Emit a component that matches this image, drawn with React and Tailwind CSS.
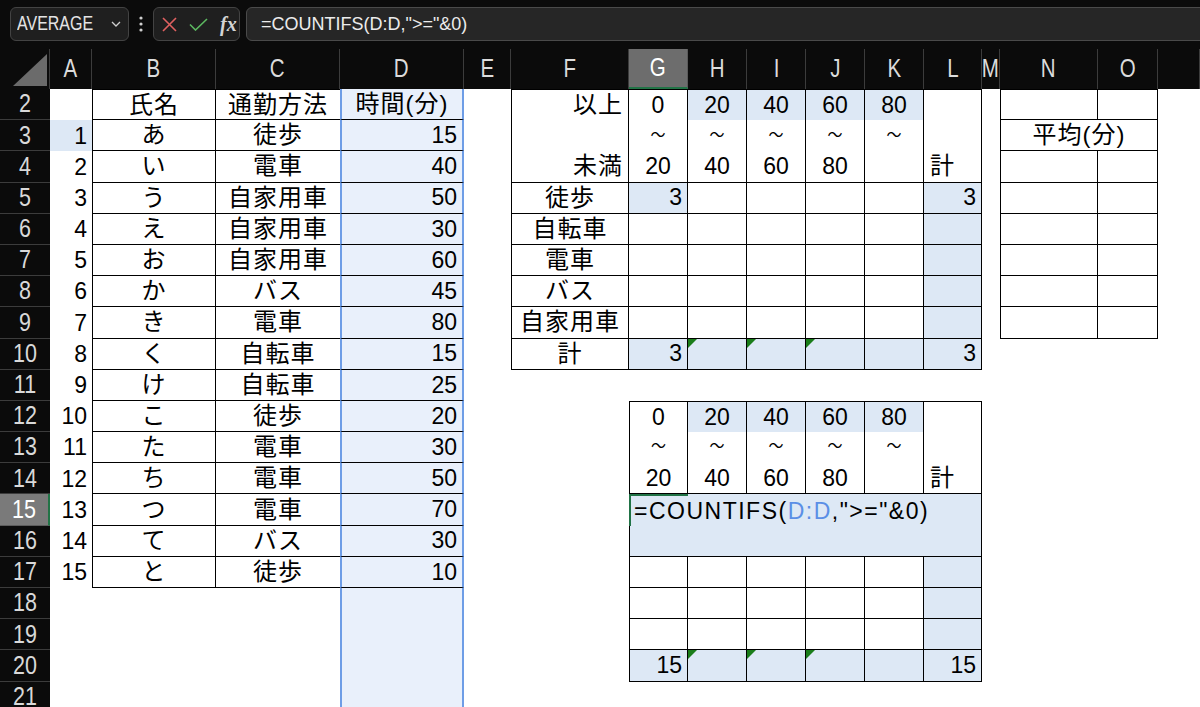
import React from "react";

// column letter + width class (widths measured off the sheet)
const COLS = [
  ["A", "w-[42px]"],
  ["B", "w-[124px]"],
  ["C", "w-[124px]"],
  ["D", "w-[124px]"],
  ["E", "w-[47px]"],
  ["F", "w-[118px]"],
  ["G", "w-[59px]"],
  ["H", "w-[59px]"],
  ["I", "w-[59px]"],
  ["J", "w-[59px]"],
  ["K", "w-[59px]"],
  ["L", "w-[58px]"],
  ["M", "w-[18px]"],
  ["N", "w-[98px]"],
  ["O", "w-[60px]"],
  ["P", "flex-1"],
];

const ROWS = [2, 3, 4, 5, 6, 7, 8, 9, 10, 11, 12, 13, 14, 15, 16, 17, 18, 19, 20, 21];

const names = ["あ", "い", "う", "え", "お", "か", "き", "く", "け", "こ", "た", "ち", "つ", "て", "と"];
const ways = ["徒歩", "電車", "自家用車", "自家用車", "自家用車", "バス", "電車", "自転車", "自転車", "徒歩", "電車", "電車", "電車", "バス", "徒歩"];
const mins = [15, 40, 50, 30, 60, 45, 80, 15, 25, 20, 30, 50, 70, 30, 10];

const bc = { l: "border-l", r: "border-r", t: "border-t", b: "border-b" };
const al = {
  l: "justify-start pl-[6px]",
  c: "justify-center",
  r: "justify-end pr-[5px]",
};

// build the sheet contents
const cells = {};
const set = (key, o) => {
  cells[key] = { ...cells[key], ...o };
};

// table 1: B2:D17
for (let r = 2; r <= 17; r++) {
  set("B" + r, { b: "lrb" + (r === 2 ? "t" : "") });
  set("C" + r, { b: "b" + (r === 2 ? "t" : "") });
}
set("B2", { t: "氏名", jp: true });
set("C2", { t: "通勤方法", jp: true });
set("D2", { t: "時間(分)", jp: true });
names.forEach((n, i) => {
  const r = i + 3;
  set("A" + r, { t: i + 1, a: "r", cls: "pr-[2px]" });
  set("B" + r, { t: n, jp: true });
  set("C" + r, { t: ways[i], jp: true });
  set("D" + r, { t: mins[i], a: "r", cls: "pr-[3px]" });
});
set("A3", { bg: 1 });
for (let r = 2; r <= 21; r++) {
  set("D" + r, {
    bg: 2,
    side: r <= 17
      ? "border-l-2 border-r-2 border-b border-l-[#6e9de6] border-r-[#6e9de6] border-b-black"
      : "border-l-2 border-r-2 border-l-[#6e9de6] border-r-[#6e9de6]",
  });
}

// header block used by table 2 and table 4
const band = (top, first) => {
  const ks = ["F", "G", "H", "I", "J", "K", "L"].slice(first === "F" ? 0 : 1);
  for (let r = top; r <= top + 2; r++) {
    ks.forEach((k) => {
      set(k + r, {
        b: (k === first ? "l" : "") + "r" + (r === top ? "t" : "") + (r === top + 2 ? "b" : ""),
      });
    });
  }
  set("G" + top, { t: 0 });
  set("H" + top, { t: 20, bg: 1 });
  set("I" + top, { t: 40, bg: 1 });
  set("J" + top, { t: 60, bg: 1 });
  set("K" + top, { t: 80, bg: 1 });
  ["G", "H", "I", "J", "K"].forEach((k) => set(k + (top + 1), { t: "～", cls: "text-[15px] pb-[2px]" }));
  set("G" + (top + 2), { t: 20 });
  set("H" + (top + 2), { t: 40 });
  set("I" + (top + 2), { t: 60 });
  set("J" + (top + 2), { t: 80 });
  set("L" + (top + 2), { t: "計", a: "l", jp: true });
};

// table 2: F2:L10
band(2, "F");
set("F2", { t: "以上", a: "r", jp: true });
set("F4", { t: "未満", a: "r", jp: true });
["徒歩", "自転車", "電車", "バス", "自家用車", "計"].forEach((lab, i) => {
  const r = i + 5;
  ["F", "G", "H", "I", "J", "K", "L"].forEach((k) => set(k + r, { b: (k === "F" ? "l" : "") + "rb" }));
  set("F" + r, { t: lab, jp: true });
  set("L" + r, { bg: 1 });
});
set("G5", { t: 3, a: "r", bg: 1 });
set("L5", { t: 3, a: "r" });
set("G10", { t: 3, a: "r", bg: 1 });
["H", "I", "J"].forEach((k) => set(k + "10", { bg: 1, tri: true }));
set("K10", { bg: 1 });
set("L10", { t: 3, a: "r" });

// table 3: N2:O9
for (let r = 2; r <= 9; r++) {
  set("N" + r, { b: "lrb" + (r === 2 ? "t" : "") });
  set("O" + r, { b: "rb" + (r === 2 ? "t" : "") });
}
set("N3", { t: "平均(分)", jp: true, w: "w-[158px]" });

// table 4: G12:L20
band(12, "G");
["G", "H", "I", "J", "K", "L"].forEach((k) => {
  set(k + "15", { bg: 1 });
  set(k + "16", { bg: 1, b: "b" });
});
set("G15", {
  a: "l",
  cls: "z-10 border-l-2 border-t-2 border-[#217346] !pl-[3px] tracking-[1.5px]",
  t: (
    <>
      {"=COUNTIFS("}
      <span className="text-[#5b8fe6]">D:D</span>
      {',">="&0)'}
    </>
  ),
});
set("G16", { b: "lb" });
set("L15", { b: "r" });
set("L16", { b: "rb" });
for (let r = 17; r <= 20; r++) {
  ["G", "H", "I", "J", "K", "L"].forEach((k) => set(k + r, { b: (k === "G" ? "l" : "") + "rb" }));
  set("L" + r, { bg: 1 });
}
set("G20", { t: 15, a: "r", bg: 1 });
["H", "I", "J"].forEach((k) => set(k + "20", { bg: 1, tri: true }));
set("K20", { bg: 1 });
set("L20", { t: 15, a: "r" });

const Cell = ({ col, r }) => {
  const [k, w] = col;
  const c = cells[k + r] || {};
  const cls = [
    "relative shrink-0 h-full flex items-center whitespace-nowrap",
    c.w || w,
    c.b ? "border-black " + c.b.split("").map((x) => bc[x]).join(" ") : "",
    c.side || "",
    c.bg === 1 ? "bg-[#dde8f5]" : c.bg === 2 ? "bg-[#e9f0fb]" : "",
    al[c.a || "c"],
    c.jp ? "text-[24px] tracking-[1px]" : "",
    c.cls || "",
  ].join(" ");

  return (
    <div className={cls}>
      {c.tri && (
        <span className="absolute top-0 left-0 w-0 h-0 border-t-[9px] border-r-[9px] border-t-[#1a7d1a] border-r-transparent" />
      )}
      {c.t}
    </div>
  );
};

const Row = ({ r }) => {
  const cols = r === 3 ? COLS.filter((c) => c[0] !== "O") : COLS;
  const active = r === 15;

  return (
    <div className="flex h-[31.2px]">
      <div
        className={
          "w-[50px] shrink-0 h-full flex items-center justify-center border-b font-['Liberation_Sans',sans-serif] text-[25px] " +
          (active
            ? "bg-[#7a7a7a] border-b-[#5c5c5c] border-r-2 border-r-[#217346] text-white"
            : "bg-[#0b0b0b] border-b-[#3c3c3c] text-[#d9d9d9]")
        }
      >
        <span className="inline-block scale-x-[0.86]">{r}</span>
      </div>
      {cols.map((c) => (
        <Cell key={c[0]} col={c} r={r} />
      ))}
    </div>
  );
};

const Toolbar = () => (
  <div className="h-[49px] shrink-0 bg-[#0b0b0b] flex items-start pt-[7px] pl-[10px]">
    <div className="w-[119px] h-[34px] shrink-0 rounded-md bg-[#1f1f1f] border border-[#434343] flex items-center justify-between pl-[6px] pr-[7px]">
      <span className="inline-block origin-left scale-x-[0.82] font-['Liberation_Sans',sans-serif] text-[19.5px] text-[#e4e4e4]">
        AVERAGE
      </span>
      <svg width="10" height="6" viewBox="0 0 10 6" fill="none">
        <path d="M1 1l4 4 4-4" stroke="#cfcfcf" strokeWidth="1.3" />
      </svg>
    </div>
    <div className="w-[24px] h-[34px] shrink-0 flex items-center justify-center">
      <svg width="4" height="16" viewBox="0 0 4 16">
        <circle cx="2" cy="2" r="1.6" fill="#cfcfcf" />
        <circle cx="2" cy="8" r="1.6" fill="#cfcfcf" />
        <circle cx="2" cy="14" r="1.6" fill="#cfcfcf" />
      </svg>
    </div>
    <div className="w-[87px] h-[34px] shrink-0 rounded-md bg-[#1f1f1f] border border-[#434343] flex items-center pl-[8px] gap-[12px]">
      <svg width="15" height="15" viewBox="0 0 15 15" fill="none">
        <path d="M1 1L14 14M14 1L1 14" stroke="#e06060" strokeWidth="1.6" />
      </svg>
      <svg width="19" height="13" viewBox="0 0 19 13" fill="none">
        <path d="M1 6.5l5.5 5.5L18 1" stroke="#5cb860" strokeWidth="1.6" />
      </svg>
      <span className="italic font-semibold font-['Liberation_Serif',serif] text-[20px] text-[#d4d4d4] leading-none">
        fx
      </span>
    </div>
    <div className="flex-1 h-[34px] ml-[6px] -mr-[8px] rounded-md bg-[#262626] border border-[#4a4a4a] flex items-center pl-[14px] font-['Liberation_Sans',sans-serif] text-[18px] text-[#ececec]">
      =COUNTIFS(D:D,"&gt;="&amp;0)
    </div>
  </div>
);

const HeaderRow = () => (
  <div className="flex h-[40px] shrink-0 bg-[#0b0b0b] font-['Liberation_Sans',sans-serif] text-[25px]">
    <div className="w-[50px] shrink-0 h-full border-r border-[#3c3c3c]">
      <svg width="50" height="40" viewBox="0 0 50 40">
        <polygon points="13,37 47,37 47,5" fill="#6b6b6b" />
      </svg>
    </div>
    {COLS.map(([k, w]) => (
      <div
        key={k}
        className={
          "shrink-0 h-full flex items-center justify-center border-r overflow-hidden " +
          w +
          (k === "G"
            ? " bg-[#6d6d6d] border-r-[#5a5a5a] border-b-2 border-b-[#217346] text-white"
            : " border-r-[#3c3c3c] text-[#dcdcdc]")
        }
      >
        {k !== "P" && <span className="inline-block scale-x-[0.82]">{k}</span>}
      </div>
    ))}
  </div>
);

export default function App() {
  return (
    <div className="w-[1200px] h-[707px] overflow-hidden bg-white flex flex-col">
      <Toolbar />
      <HeaderRow />
      <div className="font-['Liberation_Sans','Noto_Sans_CJK_JP',sans-serif] text-[23px] text-black">
        {ROWS.map((r) => (
          <Row key={r} r={r} />
        ))}
      </div>
    </div>
  );
}
